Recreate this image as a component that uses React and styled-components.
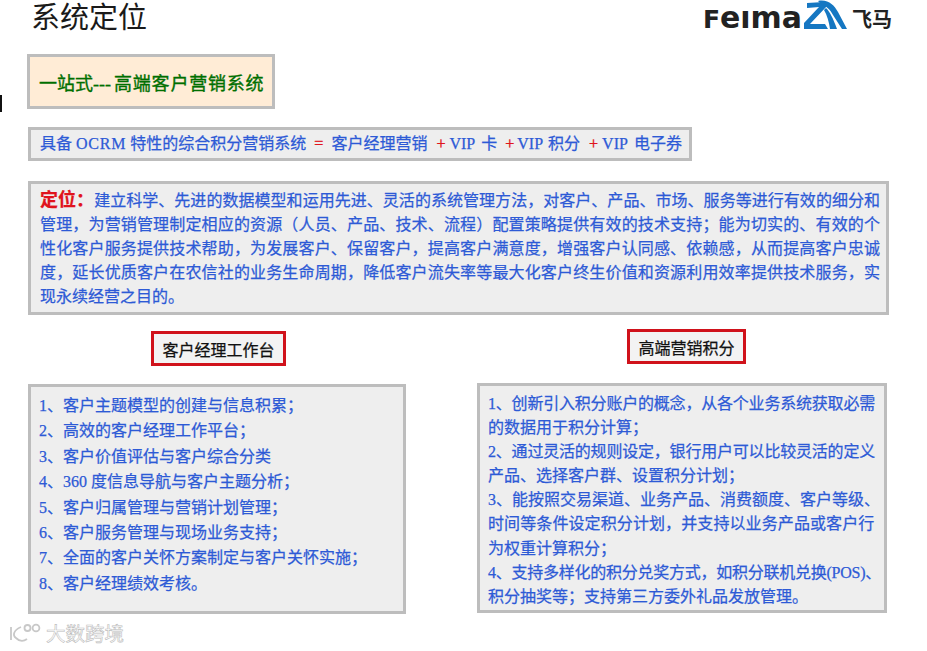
import React from "react";
import styled, { createGlobalStyle } from "styled-components";

const GlobalStyle = createGlobalStyle`
  html, body { margin: 0; padding: 0; background: #fff; }
  body { font-family: "Liberation Serif", "Noto Sans CJK SC", serif; }
`;

const Slide = styled.div`
  position: relative;
  width: 927px;
  height: 651px;
  overflow: hidden;
  background: #fff;
`;

const Header = styled.header`
  display: flex;
  justify-content: space-between;
  align-items: flex-start;
  height: 54px;
  padding: 0 35px 0 31px;
  box-sizing: border-box;
`;

const Title = styled.h1`
  margin: 0;
  font-size: 29px;
  line-height: 37px;
  font-weight: 400;
  color: #1a1a1a;
`;

const Box = styled.div`
  box-sizing: border-box;
  border: 3px solid #bdbdbd;
  background: ${(p) => p.$bg || "#eeeeee"};
  color: #2d5ad6;
  font-size: 16px;
  -webkit-text-stroke: 0.25px currentColor;
`;

const Slogan = styled(Box)`
  width: 248px;
  height: 55px;
  margin-left: 27px;
  padding-left: 9px;
  display: flex;
  align-items: center;
  font-size: 18px;
  color: #006f00;
  -webkit-text-stroke: 0.35px currentColor;
  white-space: nowrap;
`;

const Feature = styled(Box)`
  width: 664px;
  height: 34px;
  margin: 18px 0 0 28px;
  padding-left: 9px;
  line-height: 28px;
  white-space: nowrap;
`;

const Latin = styled.span`
  letter-spacing: ${(p) => p.$track || 0}px;
  margin-right: ${(p) => p.$after || 0}px;
`;

const Op = styled.span`
  color: #e0141c;
  -webkit-text-stroke: 0.4px currentColor;
  margin: 0 ${(p) => p.$after}px 0 ${(p) => p.$before}px;
`;

const Intro = styled(Box)`
  width: 861px;
  height: 134px;
  margin: 20px 0 0 28px;
  padding: 5px 6px 0 9px;
  line-height: 24px;
  text-align: justify;
`;

const Lead = styled.span`
  color: #e0141c;
  font-size: 18px;
  font-weight: 700;
  line-height: 20px;
`;

const Columns = styled.div`
  display: grid;
  grid-template-columns: 378px 410px;
  column-gap: 71px;
  margin: 14px 0 0 28px;
`;

const Column = styled.section`
  display: flex;
  flex-direction: column;
  padding-top: ${(p) => p.$top}px;
`;

const Label = styled.div`
  box-sizing: border-box;
  align-self: flex-start;
  width: ${(p) => p.$width}px;
  height: 35px;
  margin-left: ${(p) => p.$left}px;
  border: 3px solid #d0121b;
  background: #f3f3f3;
  display: flex;
  align-items: center;
  justify-content: center;
  color: #111;
  font-size: 16px;
  -webkit-text-stroke: 0.25px currentColor;
`;

const ListBox = styled(Box)`
  height: 230px;
  margin-top: ${(p) => p.$gap}px;
  padding: ${(p) => p.$pad}px 6px 0 8px;
  line-height: ${(p) => p.$line}px;
`;

const Line = styled.div`
  white-space: nowrap;
  letter-spacing: ${(p) => p.$track || 0}px;
`;

const Edge = styled.i`
  position: absolute;
  left: 0;
  top: 95px;
  width: 2px;
  height: 17px;
  background: #111;
`;

const Watermark = styled.div`
  position: absolute;
  left: 8px;
  top: 620px;
  display: flex;
  align-items: center;
  gap: 4px;
`;

const WatermarkText = styled.span`
  font-family: "Noto Sans CJK SC", sans-serif;
  font-size: 19.5px;
  line-height: 26px;
  color: #fff;
  -webkit-text-stroke: 0.6px #bdbdbd;
`;

const Logo = () => (
  <svg width="192" height="40" viewBox="0 0 192 40">
    <defs>
      <clipPath id="xheight">
        <rect x="0" y="10" width="104" height="20" />
      </clipPath>
    </defs>
    <g fontFamily="'DejaVu Sans', sans-serif" fontWeight="700" fill="#222" clipPath="url(#xheight)">
      <text x="3" y="28" fontSize="25">F</text>
      <text x="20" y="28" fontSize="30" textLength="82" lengthAdjust="spacingAndGlyphs">eima</text>
    </g>
    <path d="M107 3 L124 2 L127 6 L110 24 L125 24 L128 29 L104 29 L104 23 L119 7 L107 8 Z" fill="#1577c2" />
    <path d="M118 1 C128 -1 134 5 138 12 L147 29 L142 29 L133 15 C130 9 126 6 122 5 Z" fill="#1577c2" />
    <path d="M126 8 C130 12 133 18 137 29 L130 29 C129 22 127 15 124 10 Z" fill="#1577c2" />
    <text x="152" y="27" fontFamily="'Noto Sans CJK SC', sans-serif" fontWeight="700" fontSize="20" fill="#222">
      飞马
    </text>
  </svg>
);

const WatermarkIcon = () => (
  <svg width="34" height="24" viewBox="0 0 34 24" fill="none" stroke="#c8c8c8" strokeWidth="1.8">
    <path d="M3 6 L3 19" />
    <path d="M13 6 C6 9 4 14 8 17 C11 20 15 21 19 18" />
    <circle cx="19.5" cy="7" r="3" />
    <circle cx="28" cy="7" r="3.4" />
  </svg>
);

const leftItems = [
  "1、客户主题模型的创建与信息积累；",
  "2、高效的客户经理工作平台；",
  "3、客户价值评估与客户综合分类",
  "4、360 度信息导航与客户主题分析；",
  "5、客户归属管理与营销计划管理；",
  "6、客户服务管理与现场业务支持；",
  "7、全面的客户关怀方案制定与客户关怀实施；",
  "8、客户经理绩效考核。",
];

// some lines were set tighter in the original slide
const rightItems = [
  { text: "1、创新引入积分账户的概念，从各个业务系统获取必需", track: -0.2 },
  { text: "的数据用于积分计算；" },
  { text: "2、通过灵活的规则设定，银行用户可以比较灵活的定义", track: -0.2 },
  { text: "产品、选择客户群、设置积分计划；" },
  { text: "3、能按照交易渠道、业务产品、消费额度、客户等级、" },
  { text: "时间等条件设定积分计划，并支持以业务产品或客户行", track: 0.1 },
  { text: "为权重计算积分；" },
  { text: "4、支持多样化的积分兑奖方式，如积分联机兑换(POS)、", track: -0.25 },
  { text: "积分抽奖等；支持第三方委外礼品发放管理。" },
];

const App = () => (
  <Slide>
    <GlobalStyle />
    <Edge />
    <Header>
      <Title>系统定位</Title>
      <Logo />
    </Header>
    <Slogan $bg="#ffecd6">
      <Latin $after={3}>一站式---</Latin>
      <Latin $track={0.8}>高端客户营销系统</Latin>
    </Slogan>
    <Feature>
      具备 <Latin $track={0.8}>OCRM</Latin> 特性的综合积分营销系统
      <Op $before={8} $after={8}>=</Op>
      客户经理营销
      <Op $before={9} $after={4}>+</Op>
      <Latin $after={6}>VIP</Latin>卡
      <Op $before={8} $after={3}>+</Op>
      <Latin $after={5}>VIP</Latin>积分
      <Op $before={9} $after={4}>+</Op>
      <Latin $after={6}>VIP</Latin>电子券
    </Feature>
    <Intro>
      <Lead>定位：</Lead>
      建立科学、先进的数据模型和运用先进、灵活的系统管理方法，对客户、产品、市场、服务等进行有效的细分和管理，为营销管理制定相应的资源（人员、产品、技术、流程）配置策略提供有效的技术支持；能为切实的、有效的个性化客户服务提供技术帮助，为发展客户、保留客户，提高客户满意度，增强客户认同感、依赖感，从而提高客户忠诚度，延长优质客户在农信社的业务生命周期，降低客户流失率等最大化客户终生价值和资源利用效率提供技术服务，实现永续经营之目的。
    </Intro>
    <Columns>
      <Column $top={2}>
        <Label $width={135} $left={123}>客户经理工作台</Label>
        <ListBox $gap={18} $pad={6} $line={25.4}>
          {leftItems.map((item) => (
            <Line key={item}>{item}</Line>
          ))}
        </ListBox>
      </Column>
      <Column $top={0}>
        <Label $width={119} $left={150}>高端营销积分</Label>
        <ListBox $gap={19} $pad={6} $line={24.1}>
          {rightItems.map((item) => (
            <Line key={item.text} $track={item.track}>{item.text}</Line>
          ))}
        </ListBox>
      </Column>
    </Columns>
    <Watermark>
      <WatermarkIcon />
      <WatermarkText>大数跨境</WatermarkText>
    </Watermark>
  </Slide>
);

export default App;
